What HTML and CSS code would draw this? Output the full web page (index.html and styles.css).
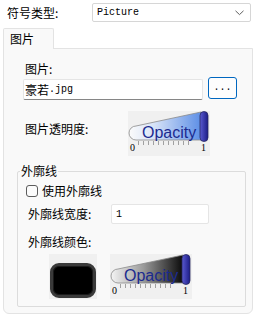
FILE: index.html
```html
<!DOCTYPE html>
<html>
<head>
<meta charset="utf-8">
<link rel="stylesheet" href="styles.css">
</head>
<body>
<div class="top">
  <span class="top-label">符号类型:</span>
  <div class="combo">
    <span class="mono">Picture</span>
    <svg class="chev" width="9" height="6" viewBox="0 0 9 6"><path d="M0.5 0.8 L4.5 4.6 L8.5 0.8" fill="none" stroke="#5f5f5f" stroke-width="1"/></svg>
  </div>
</div>
<div class="tabs"><div class="tab">图片</div></div>
<div class="panel">
  <div class="lbl pic-lbl">图片:</div>
  <div class="file-row">
    <div class="textbox"><span>豪若</span><span class="mono">.jpg</span></div>
    <div class="browse mono">...</div>
  </div>
  <div class="op-row">
    <span class="lbl op-lbl">图片透明度:</span>
    <svg class="opw" width="82" height="45" viewBox="0 0 82 45">
      <defs>
        <linearGradient id="gb" x1="0" x2="1" y1="0" y2="0">
          <stop offset="0" stop-color="#fbfbfb"/>
          <stop offset="0.35" stop-color="#d7e3f7"/>
          <stop offset="1" stop-color="#5d8fe6"/>
        </linearGradient>
        <linearGradient id="gk" x1="0" x2="1" y1="0" y2="0">
          <stop offset="0" stop-color="#f4f4f4"/>
          <stop offset="0.45" stop-color="#9a9a9a"/>
          <stop offset="1" stop-color="#0a0a0a"/>
        </linearGradient>
        <linearGradient id="th" x1="0" x2="1" y1="0" y2="0">
          <stop offset="0" stop-color="#5a5ad0"/>
          <stop offset="1" stop-color="#1c1c86"/>
        </linearGradient>
      </defs>
      <rect width="82" height="45" fill="#f0f0f0"/>
      <path d="M8 15 L73 1 L73 29 L8 29 A7 7 0 0 1 8 15 Z" fill="url(#gb)" stroke="#8a8a8a" stroke-width="0.8"/>
      <text x="14" y="27" class="optext">Opacity</text>
      <rect x="72" y="0.5" width="8" height="30" rx="4" fill="url(#th)" stroke="#2a2a60" stroke-width="0.8"/>
      <g stroke="#a0a0a0" stroke-width="1">
        <path d="M10.5 30v4M15.5 30v4M20.5 30v4M25.5 30v4M30.5 30v4M35.5 30v4M40.5 30v4M45.5 30v4M50.5 30v4M55.5 30v4M60.5 30v4"/>
      </g>
      <text x="2" y="40" class="num">0</text>
      <text x="73" y="40" class="num">1</text>
    </svg>
  </div>
  <fieldset class="group">
    <legend>外廓线</legend>
    <div class="chk-row"><span class="chk"></span><span>使用外廓线</span></div>
    <div class="w-row">
      <span class="lbl w-lbl">外廓线宽度:</span>
      <div class="numbox mono">1</div>
    </div>
    <div class="lbl c-lbl">外廓线颜色:</div>
    <div class="color-row">
      <div class="swatch"><div class="sw-inner"></div></div>
      <svg class="opw" width="82" height="45" viewBox="0 0 82 45">
        <rect width="82" height="45" fill="#f0f0f0"/>
        <path d="M8 15 L73 1 L73 29 L8 29 A7 7 0 0 1 8 15 Z" fill="url(#gk)" stroke="#8a8a8a" stroke-width="0.8"/>
        <text x="14" y="27" class="optext">Opacity</text>
        <rect x="72" y="0.5" width="8" height="30" rx="4" fill="url(#th)" stroke="#2a2a60" stroke-width="0.8"/>
        <g stroke="#a0a0a0" stroke-width="1">
          <path d="M10.5 30v4M15.5 30v4M20.5 30v4M25.5 30v4M30.5 30v4M35.5 30v4M40.5 30v4M45.5 30v4M50.5 30v4M55.5 30v4M60.5 30v4"/>
        </g>
        <text x="2" y="40" class="num">0</text>
        <text x="73" y="40" class="num">1</text>
      </svg>
    </div>
  </fieldset>
</div>
</body>
</html>
```
FILE: styles.css
```css
* { box-sizing: border-box; }
html, body { margin: 0; padding: 0; background: #ffffff; }
body {
  width: 257px;
  height: 316px;
  overflow: hidden;
  font-family: "Noto Sans CJK SC", "Noto Sans", sans-serif;
  font-size: 12px;
  line-height: 16px;
  color: #000;
}
.mono { font-family: "Liberation Mono", "DejaVu Sans Mono", monospace; font-size: 10px; }

.top {
  display: flex;
  align-items: center;
  padding: 3px 0 0 7px;
  height: 22px;
}
.top-label { width: 85px; }
.combo {
  width: 159px;
  height: 19px;
  border: 1px solid #d6d6d6;
  border-radius: 2px;
  display: flex;
  align-items: center;
  justify-content: space-between;
  padding: 0 6px 0 4px;
  background: #fff;
}
.chev { display: block; }

.tabs {
  margin-top: 6px;
  padding-left: 3px;
  display: flex;
  position: relative;
  z-index: 1;
}
.tab {
  width: 51px;
  height: 21px;
  border: 1px solid #e3e3e3;
  border-bottom: none;
  background: #f9f9f9;
  padding: 2px 0 0 6px;
  border-radius: 2px 2px 0 0;
}
.panel {
  margin: -1px 0 0 3px;
  width: 250px;
  height: 266px;
  border: 1px solid #e3e3e3;
  border-radius: 0 0 6px 6px;
  background: #f9f9f9;
  padding: 12px 0 0 19px;
}
.lbl { display: block; }
.pic-lbl { padding-left: 2px; height: 16px; }
.file-row {
  margin-top: 2px;
  display: flex;
  align-items: center;
  gap: 5px;
}
.textbox {
  width: 180px;
  height: 21px;
  background: #fff;
  border: 1px solid #e5e5e5;
  border-bottom-color: #868686;
  border-radius: 2px;
  padding: 1px 0 0 1px;
  display: flex;
  align-items: center;
}
.browse {
  width: 29px;
  height: 22px;
  border: 1px solid #0067c0;
  border-radius: 3px;
  background: #fdfdfd;
  display: flex;
  align-items: center;
  justify-content: center;
  margin-top: -3px;
}
.op-row {
  margin-top: 11px;
  display: flex;
  align-items: flex-start;
}
.op-lbl { width: 105px; padding-left: 2px; margin-top: 10px; }
.opw { display: block; }
.optext { font-family: "Liberation Sans", Arial, sans-serif; font-size: 16px; fill: #1b2a8f; }
.num { font-family: "Liberation Serif", "DejaVu Serif", serif; font-size: 10px; fill: #000; }

.group {
  margin: 7px 0 0 -6px;
  width: 229px;
  border: 1px solid #dcdcdc;
  border-radius: 2px;
  padding: 0 0 7px 0;
  min-width: 0;
}
.group legend {
  margin-left: 2px;
  padding: 0 1px;
  line-height: 16px;
}
.chk-row {
  margin-top: 4px;
  padding-left: 8px;
  display: flex;
  align-items: center;
  gap: 4px;
  height: 16px;
}
.chk {
  width: 12px;
  height: 12px;
  border: 1px solid #5c5c5c;
  border-radius: 3px;
  background: #fbfbfb;
}
.w-row {
  margin-top: 5px;
  display: flex;
  align-items: center;
  padding-left: 10px;
}
.w-lbl { width: 83px; }
.numbox {
  width: 98px;
  height: 20px;
  background: #fff;
  border: 1px solid #e5e5e5;
  border-radius: 2px;
  padding: 2px 0 0 4px;
  display: flex;
  align-items: center;
}
.c-lbl { margin-top: 10px; padding-left: 10px; }
.color-row {
  margin-top: 4px;
  padding-left: 31px;
  display: flex;
  gap: 13px;
}
.swatch {
  width: 48px;
  height: 45px;
  background: #f0f0f0;
  padding: 9px 1px 0 1px;
}
.sw-inner {
  width: 46px;
  height: 35px;
  background: #000;
  border: 3px solid #3a3a3a;
  border-radius: 9px;
  box-shadow: inset 0 0 0 1px #1a1a1a;
}
```
